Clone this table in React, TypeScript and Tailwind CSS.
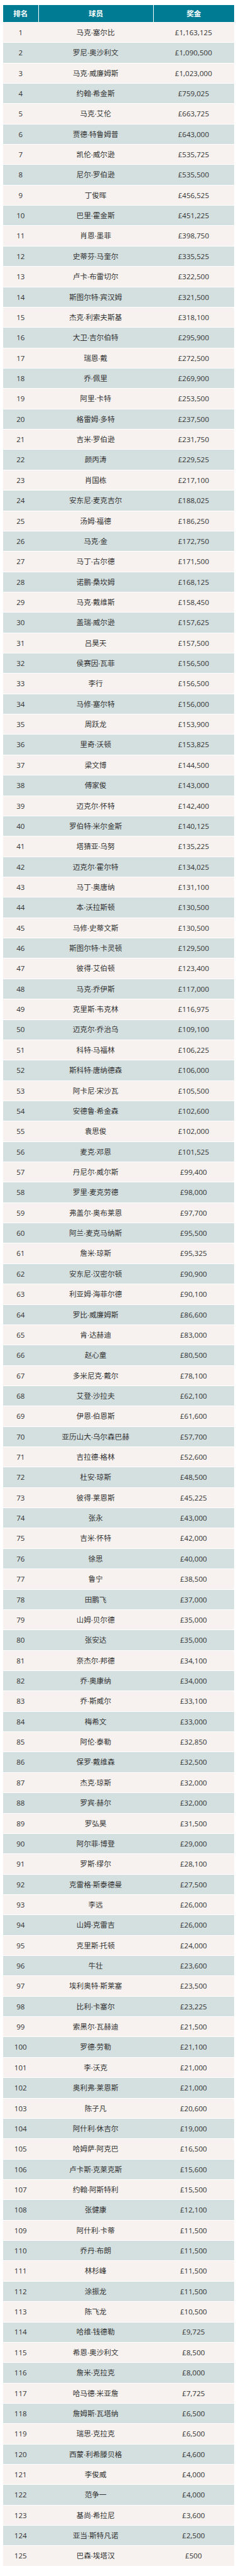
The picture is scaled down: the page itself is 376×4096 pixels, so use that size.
const rows: [string, string][] = [
  ['马克·塞尔比', '£1,163,125'],
  ['罗尼·奥沙利文', '£1,090,500'],
  ['马克·威廉姆斯', '£1,023,000'],
  ['约翰·希金斯', '£759,025'],
  ['马克·艾伦', '£663,725'],
  ['贾德·特鲁姆普', '£643,000'],
  ['凯伦·威尔逊', '£535,725'],
  ['尼尔·罗伯逊', '£535,500'],
  ['丁俊晖', '£456,525'],
  ['巴里·霍金斯', '£451,225'],
  ['肖恩·墨菲', '£398,750'],
  ['史蒂芬·马奎尔', '£335,525'],
  ['卢卡·布雷切尔', '£322,500'],
  ['斯图尔特·宾汉姆', '£321,500'],
  ['杰克·利索夫斯基', '£318,100'],
  ['大卫·吉尔伯特', '£295,900'],
  ['瑞恩·戴', '£272,500'],
  ['乔·佩里', '£269,900'],
  ['阿里·卡特', '£253,500'],
  ['格雷姆·多特', '£237,500'],
  ['吉米·罗伯逊', '£231,750'],
  ['颜丙涛', '£229,525'],
  ['肖国栋', '£217,100'],
  ['安东尼·麦克吉尔', '£188,025'],
  ['汤姆·福德', '£186,250'],
  ['马克·金', '£172,750'],
  ['马丁·古尔德', '£171,500'],
  ['诺鹏·桑坎姆', '£168,125'],
  ['马克·戴维斯', '£158,450'],
  ['盖瑞·威尔逊', '£157,625'],
  ['吕昊天', '£157,500'],
  ['侯赛因·瓦菲', '£156,500'],
  ['李行', '£156,500'],
  ['马修·塞尔特', '£156,000'],
  ['周跃龙', '£153,900'],
  ['里奇·沃顿', '£153,825'],
  ['梁文博', '£144,500'],
  ['傅家俊', '£143,000'],
  ['迈克尔·怀特', '£142,400'],
  ['罗伯特·米尔金斯', '£140,125'],
  ['塔猜亚·乌努', '£135,225'],
  ['迈克尔·霍尔特', '£134,025'],
  ['马丁·奥唐纳', '£131,100'],
  ['本·沃拉斯顿', '£130,500'],
  ['马修·史蒂文斯', '£130,500'],
  ['斯图尔特·卡灵顿', '£129,500'],
  ['彼得·艾伯顿', '£123,400'],
  ['马克·乔伊斯', '£117,000'],
  ['克里斯·韦克林', '£116,975'],
  ['迈克尔·乔治乌', '£109,100'],
  ['科特·马福林', '£106,225'],
  ['斯科特·唐纳德森', '£106,000'],
  ['阿卡尼·宋沙瓦', '£105,500'],
  ['安德鲁·希金森', '£102,600'],
  ['袁思俊', '£102,000'],
  ['麦克·邓恩', '£101,525'],
  ['丹尼尔·威尔斯', '£99,400'],
  ['罗里·麦克劳德', '£98,000'],
  ['弗盖尔·奥布莱恩', '£97,700'],
  ['阿兰·麦克马纳斯', '£95,500'],
  ['詹米·琼斯', '£95,325'],
  ['安东尼·汉密尔顿', '£90,900'],
  ['利亚姆·海菲尔德', '£90,100'],
  ['罗比·威廉姆斯', '£86,600'],
  ['肯·达赫迪', '£83,000'],
  ['赵心童', '£80,500'],
  ['多米尼克·戴尔', '£78,100'],
  ['艾登·沙拉夫', '£62,100'],
  ['伊恩·伯恩斯', '£61,600'],
  ['亚历山大·乌尔森巴赫', '£57,700'],
  ['吉拉德·格林', '£52,600'],
  ['杜安·琼斯', '£48,500'],
  ['彼得·莱恩斯', '£45,225'],
  ['张永', '£43,000'],
  ['吉米·怀特', '£42,000'],
  ['徐思', '£40,000'],
  ['鲁宁', '£38,500'],
  ['田鹏飞', '£37,000'],
  ['山姆·贝尔德', '£35,000'],
  ['张安达', '£35,000'],
  ['奈杰尔·邦德', '£34,100'],
  ['乔·奥康纳', '£34,000'],
  ['乔·斯威尔', '£33,100'],
  ['梅希文', '£33,000'],
  ['阿伦·泰勒', '£32,850'],
  ['保罗·戴维森', '£32,500'],
  ['杰克·琼斯', '£32,000'],
  ['罗宾·赫尔', '£32,000'],
  ['罗弘昊', '£31,500'],
  ['阿尔菲·博登', '£29,000'],
  ['罗斯·缪尔', '£28,100'],
  ['克雷格·斯泰德曼', '£27,500'],
  ['李远', '£26,000'],
  ['山姆·克雷吉', '£26,000'],
  ['克里斯·托顿', '£24,000'],
  ['牛壮', '£23,600'],
  ['埃利奥特·斯莱塞', '£23,500'],
  ['比利·卡塞尔', '£23,225'],
  ['索黑尔·瓦赫迪', '£21,500'],
  ['罗德·劳勒', '£21,100'],
  ['李·沃克', '£21,000'],
  ['奥利弗·莱恩斯', '£21,000'],
  ['陈子凡', '£20,600'],
  ['阿什利·休吉尔', '£19,000'],
  ['哈姆萨·阿克巴', '£16,500'],
  ['卢卡斯·克莱克斯', '£15,600'],
  ['约翰·阿斯特利', '£15,500'],
  ['张健康', '£12,100'],
  ['阿什利·卡蒂', '£11,500'],
  ['乔丹·布朗', '£11,500'],
  ['林杉峰', '£11,500'],
  ['涂振龙', '£11,500'],
  ['陈飞龙', '£10,500'],
  ['哈维·钱德勒', '£9,725'],
  ['希恩·奥沙利文', '£8,500'],
  ['詹米·克拉克', '£8,000'],
  ['哈马德·米亚詹', '£7,725'],
  ['詹姆斯·瓦塔纳', '£6,500'],
  ['瑞思·克拉克', '£6,500'],
  ['西蒙·利希滕贝格', '£4,600'],
  ['李俊威', '£4,000'],
  ['范争一', '£4,000'],
  ['基尚·希拉尼', '£3,600'],
  ['亚当·斯特凡诺', '£2,500'],
  ['巴森·埃塔汉', '£500'],
];

export default function App() {
  return (
    <div className="bg-white pt-[8.3px] pb-[11px] font-['Open_Sans','Noto_Sans_CJK_SC',sans-serif] text-[11.6px] text-[#333333]">
      <div className="ml-[5px] w-[367.7px]">
        {/* header */}
        <div className="grid h-[26.6px] grid-cols-[55.6px_183.4px_1fr] bg-[#007b94] font-bold text-white">
          <div className="flex items-center justify-center">排名</div>
          <div className="flex items-center justify-center border-l border-white">球员</div>
          <div className="flex items-center justify-center border-l border-white">奖金</div>
        </div>

        {rows.map(([name, prize], i) => (
          <div
            key={i}
            className={`grid h-[32.37px] grid-cols-[55.6px_183.4px_1fr] border-t border-white ${
              i % 2 === 0 ? 'bg-[#f7f2ef]' : 'bg-[#d4dfe0]'
            }`}
          >
            <div className="flex items-center justify-center">{i + 1}</div>
            <div className="flex items-center justify-center">{name}</div>
            <div className="flex items-center justify-center">{prize}</div>
          </div>
        ))}
      </div>
    </div>
  );
}
